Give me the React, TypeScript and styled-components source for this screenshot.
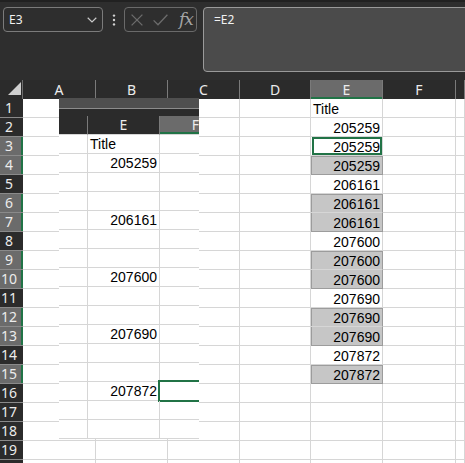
import React from "react";
import styled, { createGlobalStyle, css } from "styled-components";

const GREEN = "#217346";
const GRID = "#d6d6d6";
const HEAD_DARK = "#2b2b2b";
const HEAD_ACTIVE = "#6b6b6b";

const GlobalStyle = createGlobalStyle`
  *, *::before, *::after { box-sizing: border-box; }
  html, body { margin: 0; padding: 0; background: #2e2e2e; overflow: hidden; }
  #root { width: 465px; height: 463px; overflow: hidden; }
`;

const Page = styled.div`
  width: 465px;
  height: 463px;
  display: flex;
  flex-direction: column;
  overflow: hidden;
  background: #2e2e2e;
`;

/* ---------- Toolbar ---------- */
const Toolbar = styled.div`
  flex: 0 0 80px;
  height: 80px;
  border-top: 2px solid #212121;
  padding: 5px 0 0 3px;
  display: flex;
  align-items: flex-start;
  background: #2e2e2e;
  overflow: hidden;
`;

const NameBox = styled.div`
  flex: 0 0 100px;
  height: 25px;
  border: 1px solid #7b7b7b;
  border-radius: 4px;
  display: flex;
  align-items: center;
  justify-content: space-between;
  padding: 0 5px;
  font: 12px/16px "Noto Sans", sans-serif;
  color: #f2f2f2;
`;

const MoreDots = styled.div`
  flex: 0 0 21px;
  height: 25px;
  display: flex;
  align-items: center;
  justify-content: center;
`;

const FxGroup = styled.div`
  flex: 0 0 73px;
  height: 25px;
  border: 1px solid #6a6a6a;
  border-radius: 4px;
  display: flex;
  align-items: center;
  padding-left: 6px;
`;

const FxIcon = styled.span<{ $gap: number }>`
  display: flex;
  margin-right: ${(p) => p.$gap}px;
`;

const FxText = styled.span`
  font: italic 17px/20px "DejaVu Serif", "Liberation Serif", serif;
  color: #a5a5a5;
  letter-spacing: -1px;
  margin-top: -1px;
`;

const FormulaInput = styled.div`
  flex: 0 0 280px;
  margin-left: 6px;
  height: 65px;
  border: 1px solid #9a9a9a;
  border-radius: 4px;
  background: #4b4b4b;
  padding: 4px 10px;
  font: 12px/16px "Noto Sans", sans-serif;
  color: #f2f2f2;
`;

/* ---------- Sheet ---------- */
const Sheet = styled.div`
  flex: 1 1 auto;
  position: relative;
  overflow: hidden;
  background: #ffffff;
`;

const SheetGrid = styled.div`
  display: grid;
  grid-template-columns: 23px 73px 72px 72px 71px 72px 73px 1fr;
  grid-auto-rows: 19px;
`;

const Corner = styled.div`
  background: ${HEAD_DARK};
  border-right: 1px solid #6e6e6e;
  display: flex;
  justify-content: flex-end;
  align-items: flex-end;
  padding: 0 1px 4px 0;
`;

const ColHead = styled.div<{ $active?: boolean }>`
  background: ${(p) => (p.$active ? HEAD_ACTIVE : HEAD_DARK)};
  border-right: 1px solid #7a7a7a;
  box-shadow: ${(p) => (p.$active ? `inset 0 -2px 0 ${GREEN}` : "none")};
  display: flex;
  align-items: center;
  justify-content: center;
  font: 14px/19px "Noto Sans", sans-serif;
  color: #ececec;
`;

const RowHead = styled.div<{ $active?: boolean }>`
  background: ${(p) => (p.$active ? HEAD_ACTIVE : HEAD_DARK)};
  border-bottom: 1px solid #8a8a8a;
  box-shadow: ${(p) => (p.$active ? `inset -2px 0 0 ${GREEN}` : "none")};
  padding-right: 5px;
  text-align: center;
  font: 14px/18px "Noto Sans", sans-serif;
  color: #ececec;
  white-space: nowrap;
  overflow: hidden;
`;

const Cell = styled.div<{
  $align?: "left" | "right";
  $gray?: boolean;
  $gStart?: boolean;
  $gEnd?: boolean;
  $selected?: boolean;
}>`
  position: relative;
  background: #ffffff;
  border-right: 1px solid ${GRID};
  border-bottom: 1px solid ${GRID};
  display: flex;
  align-items: flex-end;
  justify-content: ${(p) => (p.$align === "left" ? "flex-start" : "flex-end")};
  padding: 0 2px;
  font: 14px/16px "Liberation Sans", Arial, sans-serif;
  color: #000000;
  white-space: nowrap;
  overflow: visible;
  ${(p) =>
    p.$gray &&
    css`
      background: #c6c6c6;
      border-right-color: #9c9c9c;
      border-bottom-color: ${p.$gEnd ? "#9c9c9c" : GRID};
      box-shadow: inset 1px 0 0 #9c9c9c ${p.$gStart ? ", inset 0 1px 0 #9c9c9c" : ""};
    `}
  ${(p) =>
    p.$selected &&
    css`
      &::after {
        content: "";
        position: absolute;
        top: 0;
        left: 1px;
        right: 0;
        bottom: 0;
        border: 2px solid ${GREEN};
      }
    `}
`;

/* ---------- Ghost pane (overlay) ---------- */
const Ghost = styled.div`
  position: absolute;
  left: 59px;
  top: 18px;
  width: 140px;
  height: 341px;
  overflow: hidden;
  background: #ffffff;
  display: flex;
  flex-direction: column;
`;

const GhostBand = styled.div`
  flex: 0 0 11px;
  background: #4f4f4f;
  border-bottom: 1px solid #8c8c8c;
`;

const GhostGap = styled.div`
  flex: 0 0 7px;
  background: ${HEAD_DARK};
`;

const GhostGrid = styled.div`
  display: grid;
  grid-template-columns: 29px 72px 72px;
  grid-auto-rows: 19px;
  width: 173px;
`;

const GhostHead = styled.div<{ $active?: boolean }>`
  background: ${(p) => (p.$active ? HEAD_ACTIVE : HEAD_DARK)};
  border-right: 1px solid #7a7a7a;
  border-bottom: 1px solid ${GRID};
  box-shadow: ${(p) => (p.$active ? `inset 0 -2px 0 ${GREEN}` : "none")};
  display: flex;
  align-items: center;
  justify-content: center;
  font: 14px/18px "Noto Sans", sans-serif;
  color: #ececec;
`;

const GhostCell = styled.div<{ $align?: "left" | "right"; $selected?: boolean }>`
  position: relative;
  border-right: 1px solid ${GRID};
  border-bottom: 1px solid ${GRID};
  display: flex;
  align-items: flex-end;
  justify-content: ${(p) => (p.$align === "left" ? "flex-start" : "flex-end")};
  padding: 0 2px 1px;
  font: 14px/16px "Liberation Sans", Arial, sans-serif;
  color: #000000;
  white-space: nowrap;
  ${(p) =>
    p.$selected &&
    css`
      &::after {
        content: "";
        position: absolute;
        top: -2px;
        left: -2px;
        right: -1px;
        bottom: -2px;
        border: 2px solid ${GREEN};
      }
    `}
`;

/* ---------- Data ---------- */
type ECell = { text?: string; align?: "left" | "right"; gray?: boolean; start?: boolean; end?: boolean; selected?: boolean };

const eColumn: ECell[] = [
  { text: "Title", align: "left" },
  { text: "205259" },
  { text: "205259", selected: true },
  { text: "205259", gray: true, start: true, end: true },
  { text: "206161" },
  { text: "206161", gray: true, start: true },
  { text: "206161", gray: true, end: true },
  { text: "207600" },
  { text: "207600", gray: true, start: true },
  { text: "207600", gray: true, end: true },
  { text: "207690" },
  { text: "207690", gray: true, start: true },
  { text: "207690", gray: true, end: true },
  { text: "207872" },
  { text: "207872", gray: true, start: true, end: true },
  {}, {}, {}, {},
];

const activeRows = new Set([3, 4, 6, 7, 9, 10, 12, 13, 15]);
const colLetters = ["A", "B", "C", "D", "E", "F", ""];

const ghostRows: string[] = [
  "Title", "205259", "", "", "206161", "", "", "207600", "", "", "207690", "", "", "207872", "", "",
];

const ChevronIcon = () => (
  <svg width="10" height="6" viewBox="0 0 10 6">
    <path d="M0.7 0.8 L5 5 L9.3 0.8" fill="none" stroke="#c9c9c9" strokeWidth="1.2" />
  </svg>
);

const DotsIcon = () => (
  <svg width="4" height="12" viewBox="0 0 4 12">
    <circle cx="2" cy="1.6" r="1.2" fill="#d2d2d2" />
    <circle cx="2" cy="6" r="1.2" fill="#d2d2d2" />
    <circle cx="2" cy="10.4" r="1.2" fill="#d2d2d2" />
  </svg>
);

const CancelIcon = () => (
  <svg width="12" height="12" viewBox="0 0 12 12">
    <path d="M0.6 0.6 L11.4 11.4 M11.4 0.6 L0.6 11.4" stroke="#6c6c6c" strokeWidth="1.3" fill="none" />
  </svg>
);

const CheckIcon = () => (
  <svg width="15" height="12" viewBox="0 0 15 12">
    <path d="M0.6 6.4 L5 10.8 L14.4 0.8" stroke="#6c6c6c" strokeWidth="1.3" fill="none" />
  </svg>
);

const SelectAllIcon = () => (
  <svg width="13" height="13" viewBox="0 0 13 13">
    <polygon points="13,0 13,13 0,13" fill="#cfcfcf" />
  </svg>
);

export default function App() {
  const rows = eColumn.map((e, i) => {
    const r = i + 1;
    return (
      <React.Fragment key={r}>
        <RowHead $active={activeRows.has(r)}>{r}</RowHead>
        <Cell />
        <Cell />
        <Cell />
        <Cell />
        <Cell $align={e.align} $gray={e.gray} $gStart={e.start} $gEnd={e.end} $selected={e.selected}>
          {e.text}
        </Cell>
        <Cell />
        <Cell />
      </React.Fragment>
    );
  });

  return (
    <Page>
      <GlobalStyle />
      <Toolbar>
        <NameBox>
          <span>E3</span>
          <ChevronIcon />
        </NameBox>
        <MoreDots>
          <DotsIcon />
        </MoreDots>
        <FxGroup>
          <FxIcon $gap={10}>
            <CancelIcon />
          </FxIcon>
          <FxIcon $gap={11}>
            <CheckIcon />
          </FxIcon>
          <FxText>fx</FxText>
        </FxGroup>
        <FormulaInput>=E2</FormulaInput>
      </Toolbar>
      <Sheet>
        <SheetGrid>
          <Corner>
            <SelectAllIcon />
          </Corner>
          {colLetters.map((c, i) => (
            <ColHead key={i} $active={c === "E"}>
              {c}
            </ColHead>
          ))}
          {rows}
          <RowHead />
          <Cell />
          <Cell />
          <Cell />
          <Cell />
          <Cell />
          <Cell />
          <Cell />
        </SheetGrid>
        <Ghost>
          <GhostBand />
          <GhostGap />
          <GhostGrid>
            <GhostHead />
            <GhostHead>E</GhostHead>
            <GhostHead $active>F</GhostHead>
            {ghostRows.map((t, i) => (
              <React.Fragment key={i}>
                <GhostCell />
                <GhostCell $align={t === "Title" ? "left" : "right"}>{t}</GhostCell>
                <GhostCell $selected={i === 13} />
              </React.Fragment>
            ))}
          </GhostGrid>
        </Ghost>
      </Sheet>
    </Page>
  );
}
